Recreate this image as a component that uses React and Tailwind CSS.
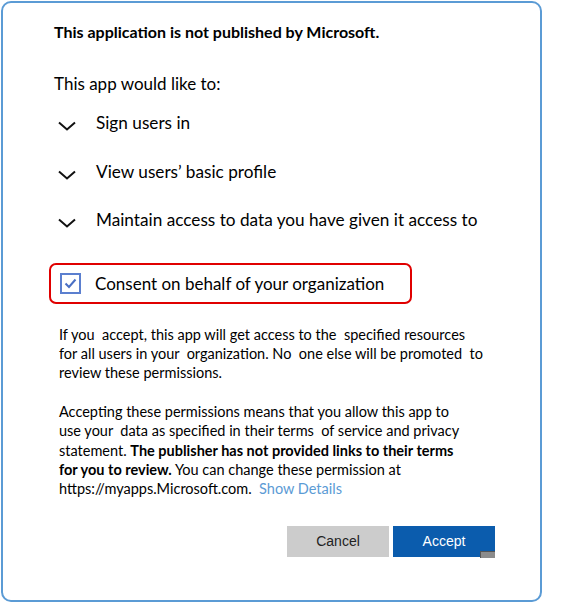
import React from 'react';

const font = { fontFamily: 'Lato, "Open Sans", sans-serif' };

const Chevron = () => (
  <svg width="18" height="10" viewBox="0 0 18 10" className="shrink-0">
    <path d="M1 1.5 L9 8.5 L17 1.5" fill="none" stroke="#111" strokeWidth="2" />
  </svg>
);

const Permission = ({ label }) => (
  <div className="flex items-center h-[22px]">
    <div className="w-[42px] pl-[4px] pt-[6px]">
      <Chevron />
    </div>
    <span className="text-[17.2px] text-black">{label}</span>
  </div>
);

export default function App() {
  return (
    <div className="w-[577px] h-[603px] bg-white pl-[1px] pt-[1px]" style={font}>
      <div className="w-[541px] h-[601px] border-2 border-[#5b9bd5] rounded-[10px] pl-[51px] pt-[19px]">
        <h1 className="text-[16px] font-bold leading-[20px] text-black">
          This application is not published by Microsoft.
        </h1>
        <p className="mt-[31px] text-[17px] leading-[22px] text-black">This app would like to:</p>

        <div className="mt-[17px] flex flex-col gap-[26.5px]">
          <Permission label="Sign users in" />
          <Permission label="View users’ basic profile" />
          <Permission label="Maintain access to data you have given it access to" />
        </div>

        <div className="mt-[32px] -ml-[5px] w-[363px] h-[41px] border-2 border-[#e00000] rounded-[7px] flex items-center pl-[9px]">
          <div className="w-[21px] h-[21px] border-[2.5px] border-[#5b7fcf] flex items-center justify-center">
            <svg width="13" height="11" viewBox="0 0 13 11">
              <path d="M1.5 5.5 L5 9 L11.5 1.5" fill="none" stroke="#4a6fc4" strokeWidth="2" />
            </svg>
          </div>
          <span className="ml-[14px] text-[17px] text-black">Consent on behalf of your organization</span>
        </div>

        <div className="ml-[5px] mt-[21px] text-[14.5px] leading-[19px] text-black whitespace-pre">
          <p>
            {'If you  accept, this app will get access to the  specified resources'}
            <br />
            {'for all users in your  organization. No  one else will be promoted  to'}
            <br />
            {'review these permissions.'}
          </p>
          <p className="mt-[20px] leading-[19.3px]">
            {'Accepting these permissions means that you allow this app to'}
            <br />
            {'use your  data as specified in their terms  of service and privacy'}
            <br />
            {'statement. '}
            <span className="font-bold">The publisher has not provided links to their terms</span>
            <br />
            <span className="font-bold">for you to review.</span>
            {' You can change these permission at'}
            <br />
            {'https://myapps.Microsoft.com.  '}
            <span className="text-[#5b9bd5]">Show Details</span>
          </p>
        </div>

        <div className="mt-[28px] ml-[233px] flex gap-[4px]" style={{ fontFamily: '"Liberation Sans", Arial, sans-serif' }}>
          <button className="w-[102px] h-[31px] bg-[#cccccc] text-[14px] text-[#222]">Cancel</button>
          <div className="relative">
            <button className="w-[102px] h-[31px] bg-[#0b5cad] text-[14px] text-white">Accept</button>
            <div className="absolute right-0 top-[25px] w-[15px] h-[7px] bg-[#8c8c8c] border-t border-l border-[#555]" />
          </div>
        </div>
      </div>
    </div>
  );
}
